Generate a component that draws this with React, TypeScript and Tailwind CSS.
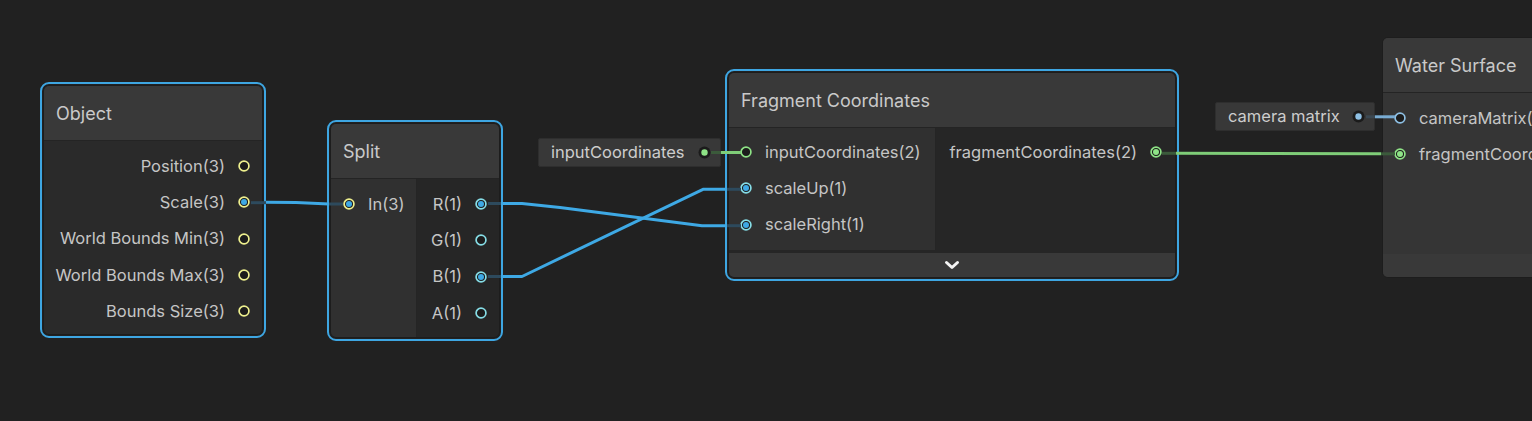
import React from "react";

const BLUE = "#3ea9e5";
const YELLOW = "#eef08e";
const CYAN = "#86dde6";
const GREEN = "#8ee386";
const MATRIX = "#8ec0e4";

function Port({ ring, dot }: { ring: string; dot?: string }) {
  return (
    <svg width="12" height="12" viewBox="0 0 12 12" className="shrink-0">
      <circle cx="6" cy="6" r="4.9" fill="#1c1c1c" stroke={ring} strokeWidth="1.7" />
      {dot && <circle cx="6" cy="6" r="3" fill={dot} />}
    </svg>
  );
}

function OutRow({ label, ring, dot }: { label: string; ring: string; dot?: string }) {
  return (
    <div className="h-[36.3px] flex items-center justify-end gap-[13px] whitespace-nowrap">
      <span>{label}</span>
      <Port ring={ring} dot={dot} />
    </div>
  );
}

function InRow({ label, ring, dot }: { label: string; ring: string; dot?: string }) {
  return (
    <div className="h-[36.3px] flex items-center gap-[13px] whitespace-nowrap">
      <Port ring={ring} dot={dot} />
      <span>{label}</span>
    </div>
  );
}

function Header({ title }: { title: string }) {
  return (
    <div className="h-[55px] shrink-0 bg-[#393939] border-b border-[#242424] flex items-center px-[12px] text-[18px] text-[#c9c9c9] whitespace-nowrap">
      {title}
    </div>
  );
}

function PropertyNode({ label, color, className }: { label: string; color: string; className: string }) {
  return (
    <div className={`absolute h-[29px] bg-[#383838] rounded-[2px] border border-[#2e2e2e] flex items-center justify-between pl-[12px] pr-[9px] text-[16.5px] text-[#cdcdcd] ${className}`}>
      <span>{label}</span>
      <svg width="13" height="13" viewBox="0 0 13 13">
        <circle cx="6.5" cy="6.5" r="6" fill="#1b1b1b" />
        <circle cx="6.5" cy="6.5" r="3.2" fill={color} />
      </svg>
    </div>
  );
}

function Edges() {
  const fadedBlue = "#2d4a5d";
  const fadedGreen = "#3b5a3b";
  return (
    <svg className="absolute inset-0 pointer-events-none" width="1532" height="421">
      <g fill="none" strokeWidth="3" strokeLinejoin="round">
        {/* Scale -> In */}
        <path d="M251 202.7 L266 202.7" stroke={fadedBlue} />
        <path d="M266 202.3 L296 202.6 L329 204" stroke={BLUE} />
        <path d="M329 204 L343 204" stroke={fadedBlue} />
        {/* R -> scaleRight */}
        <path d="M488 203.5 L501 203.5" stroke={fadedBlue} />
        <path d="M501 203.5 L522 203.5 L560 207.5 L702 225.7 L726 225.7" stroke={BLUE} />
        <path d="M727 225.7 L741 225.7" stroke={fadedBlue} />
        {/* B -> scaleUp */}
        <path d="M488 276.5 L501 276.5" stroke={fadedBlue} />
        <path d="M501 276.5 L522 276.5 L703 189.3 L726 189.3" stroke={BLUE} />
        <path d="M727 189.3 L741 189.3" stroke={fadedBlue} />
        {/* inputCoordinates property -> port */}
        <path d="M711 152.5 L721 152.5" stroke={fadedGreen} />
        <path d="M721 152.5 L741 152.5" stroke="#7fcd78" />
        {/* fragmentCoordinates -> Water Surface */}
        <path d="M1162 153.3 L1176 153.3" stroke={fadedGreen} />
        <path d="M1176 153.3 L1381 153.8" stroke="#7fcd78" />
        <path d="M1381 153.8 L1395 153.8" stroke={fadedGreen} />
        {/* camera matrix -> cameraMatrix */}
        <path d="M1366 116.8 L1375 116.8" stroke="#3b4852" />
        <path d="M1375 116.8 L1395 116.8" stroke="#79acd3" />
      </g>
    </svg>
  );
}

export default function App() {
  return (
    <div
      className="relative w-[1532px] h-[421px] overflow-hidden bg-[#212121] text-[16.5px] text-[#c5c5c5]"
      style={{ fontFamily: "Inter, 'Noto Sans', sans-serif" }}
    >
      {/* Object */}
      <div className="absolute left-[40px] top-[82px] w-[226px] h-[256px] rounded-[9px] border-2 border-[#3ea6e2] p-px">
        <div className="h-full rounded-[6px] border border-[#1d1d1d] bg-[#2a2a2a] overflow-hidden flex flex-col">
          <Header title="Object" />
          <div className="flex flex-col pt-[7px] pr-[12px]">
            <OutRow label="Position(3)" ring={YELLOW} />
            <OutRow label="Scale(3)" ring={YELLOW} dot={BLUE} />
            <OutRow label="World Bounds Min(3)" ring={YELLOW} />
            <OutRow label="World Bounds Max(3)" ring={YELLOW} />
            <OutRow label="Bounds Size(3)" ring={YELLOW} />
          </div>
        </div>
      </div>

      {/* Split */}
      <div className="absolute left-[327px] top-[120px] w-[176px] h-[221px] rounded-[9px] border-2 border-[#3ea6e2] p-px">
        <div className="h-full rounded-[6px] border border-[#1d1d1d] bg-[#262626] overflow-hidden flex flex-col">
          <Header title="Split" />
          <div className="flex-1 flex">
            <div className="w-[86px] bg-[#303030] border-r border-[#252525] pt-[7px] pl-[12px]">
              <InRow label="In(3)" ring={YELLOW} dot={BLUE} />
            </div>
            <div className="flex-1 pt-[7px] pr-[12px]">
              <OutRow label="R(1)" ring={CYAN} dot={BLUE} />
              <OutRow label="G(1)" ring={CYAN} />
              <OutRow label="B(1)" ring={CYAN} dot={BLUE} />
              <OutRow label="A(1)" ring={CYAN} />
            </div>
          </div>
        </div>
      </div>

      <PropertyNode label="inputCoordinates" color={GREEN} className="left-[538px] top-[138px] w-[183px]" />

      {/* Fragment Coordinates */}
      <div className="absolute left-[725px] top-[69px] w-[454px] h-[212px] rounded-[9px] border-2 border-[#3ea6e2] p-px">
        <div className="h-full rounded-[6px] border border-[#1d1d1d] bg-[#262626] overflow-hidden flex flex-col">
          <Header title="Fragment Coordinates" />
          <div className="h-[122px] flex">
            <div className="w-[207px] bg-[#303030] border-r border-[#252525] pt-[6px] pl-[11px]">
              <InRow label="inputCoordinates(2)" ring={GREEN} />
              <InRow label="scaleUp(1)" ring={CYAN} dot={BLUE} />
              <InRow label="scaleRight(1)" ring={CYAN} dot={BLUE} />
            </div>
            <div className="flex-1 pt-[6px] pr-[13px]">
              <OutRow label="fragmentCoordinates(2)" ring={GREEN} dot={GREEN} />
            </div>
          </div>
          <div className="flex-1 mt-[3px] bg-[#393939] flex items-center justify-center">
            <svg width="16" height="10" viewBox="0 0 16 10">
              <path d="M2.5 2.5 L8 7.5 L13.5 2.5" fill="none" stroke="#f4f4f4" strokeWidth="3" strokeLinecap="round" strokeLinejoin="round" />
            </svg>
          </div>
        </div>
      </div>

      <PropertyNode label="camera matrix" color={MATRIX} className="left-[1215px] top-[102px] w-[160px]" />

      {/* Water Surface */}
      <div className="absolute left-[1382px] top-[37px] w-[260px] h-[241px] rounded-[6px] border border-[#1d1d1d] bg-[#353535] overflow-hidden flex flex-col">
        <Header title="Water Surface" />
        <div className="h-[158px] pt-[7px] pl-[11px]">
          <InRow label="cameraMatrix(4x4)" ring={MATRIX} />
          <InRow label="fragmentCoordinates(2)" ring={GREEN} dot={GREEN} />
        </div>
        <div className="flex-1 mt-[3px] bg-[#393939]" />
      </div>

      <Edges />
    </div>
  );
}
